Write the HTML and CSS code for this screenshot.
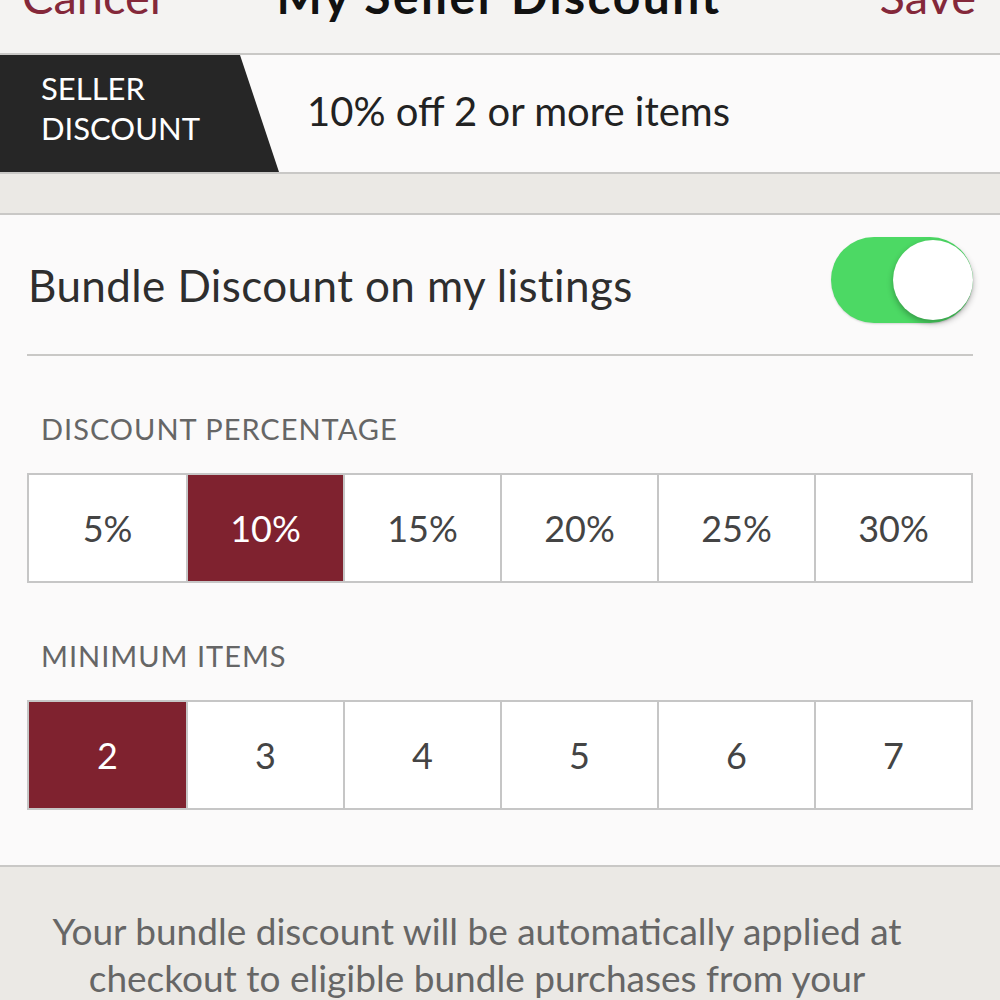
FILE: index.html
```html
<!DOCTYPE html>
<html lang="en">
<head>
    <meta charset="UTF-8">
    <meta name="viewport" content="width=device-width, initial-scale=1.0">
    <title>My Seller Discount</title>
    <link rel="stylesheet" href="styles.css">
</head>
<body>
    <div class="nav-bar">
        <a class="nav-link" href="#">Cancel</a>
        <h1 class="nav-title">My Seller Discount</h1>
        <a class="nav-link nav-right" href="#">Save</a>
    </div>

    <div class="banner">
        <div class="banner-tag">SELLER<br>DISCOUNT</div>
        <div class="banner-text">10% off 2 or more items</div>
    </div>

    <div class="spacer"></div>

    <div class="settings">
        <div class="toggle-row">
            <span class="toggle-label">Bundle Discount on my listings</span>
            <span class="switch on"><span class="knob"></span></span>
        </div>

        <div class="section-title">DISCOUNT PERCENTAGE</div>
        <div class="options">
            <div class="option">5%</div>
            <div class="option selected">10%</div>
            <div class="option">15%</div>
            <div class="option">20%</div>
            <div class="option">25%</div>
            <div class="option">30%</div>
        </div>

        <div class="section-title">MINIMUM ITEMS</div>
        <div class="options">
            <div class="option selected">2</div>
            <div class="option">3</div>
            <div class="option">4</div>
            <div class="option">5</div>
            <div class="option">6</div>
            <div class="option">7</div>
        </div>
    </div>

    <p class="note">Your bundle discount will be automatically applied at checkout to eligible bundle purchases from your closet.</p>
</body>
</html>
```

FILE: styles.css
```css
body {
    font-family: Lato, "Open Sans", sans-serif;
    margin: 0;
    padding: 0;
    background-color: #ebe9e5;
    color: #333;
}

.nav-bar {
    display: grid;
    grid-template-columns: 1fr auto 1fr;
    align-items: start;
    height: 53px;
    padding: 0 24px 0 22px;
    background-color: #f4f3f2;
    border-bottom: 2px solid #c9c8c6;
    overflow: hidden;
}

.nav-link {
    margin-top: -29px;
    font-size: 47px;
    line-height: 50px;
    text-decoration: none;
    color: #84283a;
}

.nav-right {
    justify-self: end;
}

.nav-title {
    margin: -29px 0 0;
    font-size: 48px;
    line-height: 50px;
    letter-spacing: 2.4px;
    font-weight: bold;
    color: #111;
}

.banner {
    display: flex;
    align-items: center;
    height: 117px;
    background-color: #fbfafa;
    border-bottom: 2px solid #c9c8c6;
}

.banner-tag {
    align-self: stretch;
    display: flex;
    flex-direction: column;
    justify-content: center;
    width: 279px;
    padding: 0 0 12px 41px;
    box-sizing: border-box;
    background-color: #262626;
    clip-path: polygon(0 0, 240px 0, 279px 100%, 0 100%);
    color: #fff;
    font-size: 31px;
    line-height: 40px;
}

.banner-text {
    margin: 0 0 6px 28px;
    font-size: 40px;
    color: #222;
}

.spacer {
    height: 39px;
    border-bottom: 2px solid #c9c8c6;
}

.settings {
    background-color: #fbfafa;
    padding: 0 27px 55px;
    border-bottom: 2px solid #c9c8c6;
}

.toggle-row {
    display: flex;
    justify-content: space-between;
    align-items: center;
    height: 139px;
    padding-left: 1px;
    border-bottom: 2px solid #c9c8c6;
}

.toggle-label {
    font-size: 44px;
    letter-spacing: 0.4px;
    color: #2e2e2e;
}

.switch {
    display: flex;
    justify-content: flex-end;
    width: 142px;
    height: 86px;
    margin-bottom: 10px;
    border-radius: 43px;
    background-color: #e5e5e5;
    box-shadow: 0 1px 2px rgba(0, 0, 0, 0.15);
}

.switch.on {
    background-color: #4cd964;
}

.knob {
    width: 80px;
    height: 80px;
    margin: 3px 0;
    border-radius: 50%;
    background-color: #fff;
    box-shadow: 0 3px 6px rgba(0, 0, 0, 0.3);
}

.section-title {
    padding: 57px 0 0 14px;
    height: 60px;
    font-size: 29px;
    line-height: 32px;
    letter-spacing: 1px;
    color: #666;
}

.options {
    display: grid;
    grid-template-columns: repeat(6, 1fr);
    height: 110px;
    border: 2px solid #c6c6c6;
    box-sizing: border-box;
}

.option {
    display: flex;
    align-items: center;
    justify-content: center;
    background-color: #fff;
    border-left: 2px solid #c6c6c6;
    font-size: 36px;
    color: #444;
}

.option:first-child {
    border-left: none;
}

.option.selected {
    background-color: #7f222f;
    color: #fff;
}

.note {
    margin: 0;
    padding: 40px 88px 40px 42px;
    text-align: center;
    font-size: 37px;
    line-height: 47px;
    color: #666;
}
```
